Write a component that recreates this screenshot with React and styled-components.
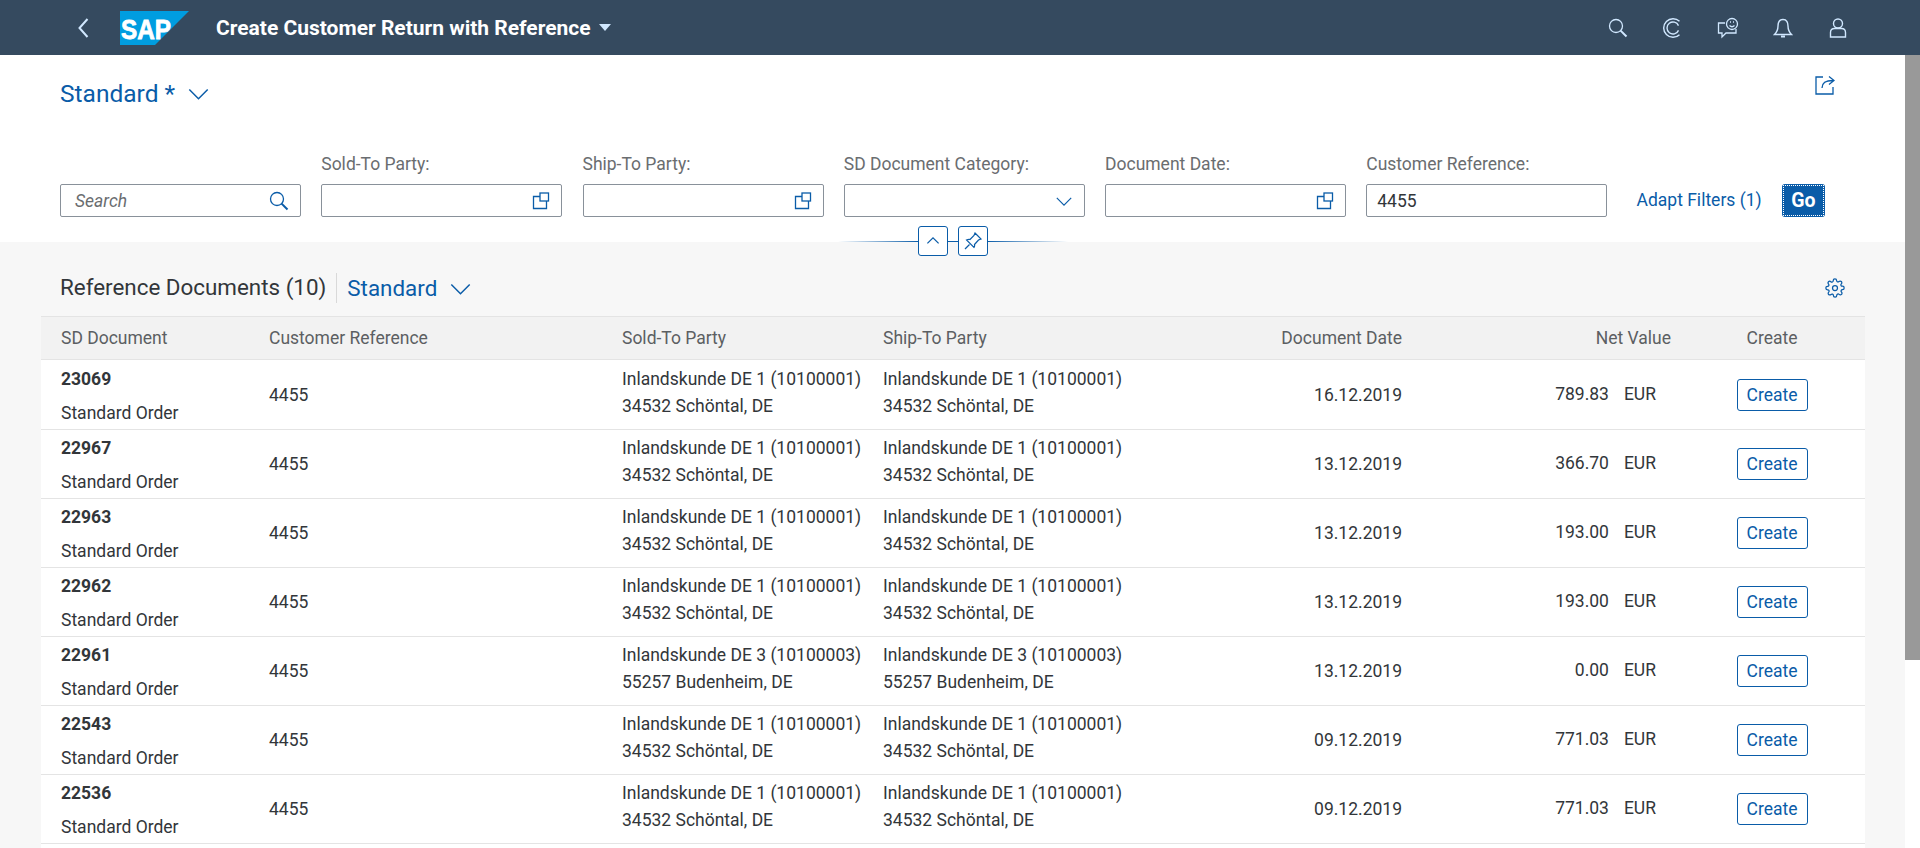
import React from 'react'
import styled, { createGlobalStyle } from 'styled-components'

const blue = '#0a5ca8'
const iconLight = '#d1e8ff'

const GlobalStyle = createGlobalStyle`
  html, body { margin: 0; padding: 0; height: 100%; overflow: hidden; }
  body { font-family: Roboto, "Liberation Sans", sans-serif; color: #32363a; background: #fff; }
`

const Page = styled.div`
  height: 848px;
  display: flex;
  flex-direction: column;
  overflow: hidden;
`
const ShellBar = styled.header`
  height: 55px;
  flex: none;
  background: #354a5f;
  display: flex;
  align-items: center;
  padding: 0 55px 0 78px;
`
const BackButton = styled.div`
  width: 42px;
  height: 20px;
  display: flex;
`
const Logo = styled.svg`
  width: 69px;
  height: 34px;
  flex: none;
  margin-right: 27px;
`
const AppTitle = styled.div`
  font-size: 21px;
  font-weight: 700;
  color: #fff;
  white-space: nowrap;
`
const Caret = styled.span`
  width: 0;
  height: 0;
  margin-left: 8px;
  border-left: 6px solid transparent;
  border-right: 6px solid transparent;
  border-top: 7px solid ${iconLight};
`
const ShellActions = styled.div`
  margin-left: auto;
  display: flex;
  align-items: center;
`
const ShellAction = styled.div`
  width: 55px;
  display: flex;
  justify-content: center;
`
const Body = styled.div`
  flex: 1;
  min-height: 0;
  display: flex;
`
const Content = styled.main`
  flex: 1;
  min-width: 0;
  display: flex;
  flex-direction: column;
  background: #f7f7f7;
`
const ScrollTrack = styled.div`
  width: 15px;
  flex: none;
  background: #fff;
`
const ScrollThumb = styled.div`
  height: 605px;
  background: #999;
`
const FilterHeader = styled.section`
  position: relative;
  height: 187px;
  flex: none;
  background: #fff;
  padding: 0 80px 0 60px;
  box-sizing: border-box;
`
const VariantRow = styled.div`
  height: 77px;
  display: flex;
  align-items: center;
  justify-content: space-between;
`
const VariantTitle = styled.div`
  display: flex;
  align-items: center;
  gap: 12px;
  color: ${blue};
  font-size: ${(p) => p.$size}px;
  line-height: 30px;
`
const ShareIcon = styled.svg`
  width: 20px;
  height: 20px;
  margin: -18px -10px 0 0;
`
const FilterRow = styled.div`
  display: flex;
  align-items: flex-end;
  gap: 20.25px;
  margin-top: 20px;
`
const Field = styled.div`
  width: 241px;
  flex: none;
`
const FieldLabel = styled.div`
  font-size: 17.5px;
  line-height: 22px;
  color: #6a6d70;
  margin-bottom: 9px;
  padding-top: 1px;
`
const InputBox = styled.div`
  height: 33px;
  box-sizing: border-box;
  border: 1px solid #89919a;
  border-radius: 2px;
  background: #fff;
  display: flex;
  align-items: center;
  justify-content: space-between;
  padding: 0 11px 0 ${(p) => (p.$search ? 14 : 10)}px;
  font-size: 17.5px;
  font-style: ${(p) => (p.$search ? 'italic' : 'normal')};
  color: ${(p) => (p.$search ? '#6a6d70' : '#32363a')};
`
const AdaptLink = styled.div`
  color: ${blue};
  font-size: 17.5px;
  line-height: 33px;
  margin-left: 9px;
  white-space: nowrap;
`
const GoButton = styled.div`
  width: 43px;
  height: 33px;
  box-sizing: border-box;
  background: ${blue};
  border-radius: 3px;
  color: #fff;
  font-size: 19.5px;
  font-weight: 700;
  display: flex;
  align-items: center;
  justify-content: center;
  position: relative;
  &::after {
    content: '';
    position: absolute;
    inset: 1px;
    border: 1px dotted #fff;
  }
`
const CollapseBar = styled.div`
  position: absolute;
  z-index: 1;
  left: 838px;
  top: 171px;
  width: 230px;
  height: 30px;
  display: flex;
  justify-content: center;
  gap: 10px;
  background: linear-gradient(to right, transparent, ${blue} 35%, ${blue} 65%, transparent) center / 100% 1px no-repeat;
`
const CollapseButton = styled.div`
  width: 30px;
  height: 30px;
  box-sizing: border-box;
  background: #fff;
  border: 1px solid ${blue};
  border-radius: 3px;
  display: flex;
  align-items: center;
  justify-content: center;
`
const TableToolbar = styled.div`
  height: 74px;
  flex: none;
  box-sizing: border-box;
  display: flex;
  align-items: flex-start;
  padding: 31px 60px 13px 60px;
`
const TableTitle = styled.div`
  font-size: 22.4px;
  line-height: 28px;
  padding-bottom: 2px;
  color: #32363a;
  padding-right: 10px;
  border-right: 1px solid #d9d9d9;
  margin-right: 10px;
`
const Gear = styled.svg`
  width: 20px;
  height: 20px;
  margin: 5px 0 0 auto;
`
const Table = styled.div`
  margin: 0 40px 0 41px;
  background: #fff;
  flex: 1;
`
const Row = styled.div`
  display: grid;
  grid-template-columns: 208px 353px 261px 261px 298px 269px 1fr;
  align-items: center;
  height: ${(p) => (p.$head ? 44 : 69)}px;
  margin-bottom: ${(p) => (p.$head ? 1 : 0)}px;
  box-sizing: border-box;
  border-bottom: 1px solid #e4e4e4;
  ${(p) => p.$head && 'background: #f2f2f2; border-top: 1px solid #e4e4e4; color: #5c5f62;'}
  font-size: 17.5px;
`
const Cell = styled.div`
  padding: 0 ${(p) => (p.$end ? 20 : 0)}px 0 ${(p) => (p.$end ? 0 : 20)}px;
  margin-top: ${(p) => (p.$body ? -2 : 0)}px;
  text-align: ${(p) => (p.$end ? 'right' : 'left')};
  white-space: nowrap;
  line-height: 27px;
`
const PartyLines = styled(Cell)`
  margin-top: -6px;
`
const DocCell = styled(Cell)`
  padding-top: 2px;
`
const DocNumber = styled.div`
  font-weight: 700;
  line-height: 33px;
`
const DocType = styled.div`
  line-height: 35px;
`
const NetValue = styled.div`
  display: flex;
  justify-content: flex-end;
  padding-right: 35px;
  gap: 15px;
  margin-top: -4px;
`
const CreateCell = styled.div`
  display: flex;
  justify-content: center;
  padding-right: 12px;
  margin-top: ${(p) => (p.$body ? -2 : 0)}px;
`
const CreateButton = styled.div`
  width: 71px;
  height: 32px;
  box-sizing: border-box;
  border: 1px solid ${blue};
  border-radius: 3px;
  color: ${blue};
  display: flex;
  align-items: center;
  justify-content: center;
  font-size: 17.5px;
`

const Stroke = ({ color = blue, size = 20, box = 20, width = 1.3, children, ...rest }) => (
  <svg width={size} height={size} viewBox={`0 0 ${box} ${box}`} fill="none" stroke={color} strokeWidth={width} {...rest}>
    {children}
  </svg>
)
const SearchIcon = ({ color }) => (
  <Stroke color={color}>
    <circle cx="8" cy="8" r="6.5" />
    <path d="M12.6 12.6 18.5 18.5" strokeWidth="2" />
  </Stroke>
)
const ValueHelp = () => (
  <Stroke size={18} box={18}>
    <rect x="8" y="1" width="8.5" height="8" />
    <path d="M8 4.5H1.5V16.5H14.5V9" />
  </Stroke>
)
const Chevron = ({ size = 20, dir = 'down', width = 1.3 }) => (
  <Stroke size={size} width={width}>
    <path d={dir === 'down' ? 'M2 6.5 10 14.5 18 6.5' : 'M3 13 10 6 17 13'} />
  </Stroke>
)

const rows = [
  ['23069', 1, '16.12.2019', '789.83'],
  ['22967', 1, '13.12.2019', '366.70'],
  ['22963', 1, '13.12.2019', '193.00'],
  ['22962', 1, '13.12.2019', '193.00'],
  ['22961', 3, '13.12.2019', '0.00'],
  ['22543', 1, '09.12.2019', '771.03'],
  ['22536', 1, '09.12.2019', '771.03'],
]

const Party = ({ kind }) => (
  <PartyLines>
    <div>{kind === 1 ? 'Inlandskunde DE 1 (10100001)' : 'Inlandskunde DE 3 (10100003)'}</div>
    <div>{kind === 1 ? '34532 Schöntal, DE' : '55257 Budenheim, DE'}</div>
  </PartyLines>
)

export default function App() {
  return (
    <Page>
      <GlobalStyle />
      <ShellBar>
        <BackButton>
          <Stroke color={iconLight} size={20} width={2}>
            <path d="M9.500 1 1.500 10l8 9" />
          </Stroke>
        </BackButton>
        <Logo viewBox="0 0 69 34">
          <polygon points="0,0 69,0 35,34 0,34" fill="#009de0" />
          <text x="1" y="28" fill="#fff" stroke="#fff" strokeWidth="0.8" fontFamily="Liberation Sans" fontWeight="700" fontSize="27" textLength="50" lengthAdjust="spacingAndGlyphs">SAP</text>
        </Logo>
        <AppTitle>Create Customer Return with Reference</AppTitle>
        <Caret />
        <ShellActions>
          <ShellAction><SearchIcon color={iconLight} /></ShellAction>
          <ShellAction>
            <Stroke color={iconLight} size={20} width={1.4}>
              <path d="M16.500 3.350A9.300 9.300 0 1 0 16.500 16.650" />
              <path d="M15.500 7.600A6 6 0 1 0 15.500 12.400" />
            </Stroke>
          </ShellAction>
          <ShellAction>
            <Stroke color={iconLight} size={22} box={22} width={1.3}>
              <path d="M8 6H1.500V16H5V20L9 16H19V12" />
              <circle cx="15" cy="7" r="5.500" />
              <path d="M12.500 8.500C14 10 16 10 17.500 8.500M13 5h1M16 5h1" />
            </Stroke>
          </ShellAction>
          <ShellAction>
            <Stroke color={iconLight} size={20} width={1.4}>
              <path d="M10 1.500C6 1.500 5 5 5 8C5 12 4 14 1.500 16.500H18.500C16 14 15 12 15 8C15 5 14 1.500 10 1.500Z" />
              <path d="M8 18.500H12" strokeWidth="2" />
            </Stroke>
          </ShellAction>
          <ShellAction>
            <Stroke color={iconLight} size={20} width={1.4}>
              <circle cx="10" cy="5.500" r="4.500" />
              <path d="M2.500 19V14.500C2.500 11.500 4.500 10.500 6.500 10.500H13.500C15.500 10.500 17.500 11.500 17.500 14.500V19Z" />
            </Stroke>
          </ShellAction>
        </ShellActions>
      </ShellBar>
      <Body>
        <Content>
          <FilterHeader>
            <VariantRow>
              <VariantTitle $size={24.5}>
                Standard *
                <Chevron size={23} />
              </VariantTitle>
              <ShareIcon viewBox="0 0 20 20" fill="none" stroke={blue} strokeWidth="1.3">
                <path d="M8 2H1V19H18V12" />
                <path d="M7 13C7 8 10 5.500 18 5.500M14 1.500 19 5.500 14 9.500" />
              </ShareIcon>
            </VariantRow>
            <FilterRow>
              <Field>
                <InputBox $search>
                  Search
                  <SearchIcon />
                </InputBox>
              </Field>
              <Field>
                <FieldLabel>Sold-To Party:</FieldLabel>
                <InputBox><span /><ValueHelp /></InputBox>
              </Field>
              <Field>
                <FieldLabel>Ship-To Party:</FieldLabel>
                <InputBox><span /><ValueHelp /></InputBox>
              </Field>
              <Field>
                <FieldLabel>SD Document Category:</FieldLabel>
                <InputBox><span /><Chevron size={18} /></InputBox>
              </Field>
              <Field>
                <FieldLabel>Document Date:</FieldLabel>
                <InputBox><span /><ValueHelp /></InputBox>
              </Field>
              <Field>
                <FieldLabel>Customer Reference:</FieldLabel>
                <InputBox>4455</InputBox>
              </Field>
              <AdaptLink>Adapt Filters (1)</AdaptLink>
              <GoButton>Go</GoButton>
            </FilterRow>
            <CollapseBar>
              <CollapseButton><Chevron size={16} dir="up" width={1.5} /></CollapseButton>
              <CollapseButton>
                <Stroke size={20} width={1.2}>
                  <path d="M12 2 18 8 15.500 9 11.500 13.500C12 15 11.500 16 11 16.500L3.500 9C4.500 8.500 5.500 8 7 8.500L11 4.500Z" />
                  <path d="M6.500 13.500 2 18" />
                </Stroke>
              </CollapseButton>
            </CollapseBar>
          </FilterHeader>
          <TableToolbar>
            <TableTitle>Reference Documents (10)</TableTitle>
            <VariantTitle $size={22.4}>
              Standard
              <Chevron size={23} />
            </VariantTitle>
            <Gear viewBox="0 0 24 24" fill="none" stroke={blue} strokeWidth="1.5">
              <circle cx="12" cy="12" r="3" />
              <path d="M19.400 15a1.650 1.650 0 0 0 .330 1.820l.060.060a2 2 0 1 1-2.830 2.830l-.060-.060a1.650 1.650 0 0 0-2.800 1.170V21a2 2 0 1 1-4 0v-.090a1.650 1.650 0 0 0-2.800-1.170l-.060.060a2 2 0 1 1-2.830-2.830l.060-.060a1.650 1.650 0 0 0-1.170-2.800H3a2 2 0 1 1 0-4h.090a1.650 1.650 0 0 0 1.170-2.800l-.060-.060a2 2 0 1 1 2.830-2.830l.060.060a1.650 1.650 0 0 0 2.800-1.170V3a2 2 0 1 1 4 0v.090a1.650 1.650 0 0 0 2.800 1.170l.060-.060a2 2 0 1 1 2.830 2.830l-.060.060a1.650 1.650 0 0 0 1.170 2.800H21a2 2 0 1 1 0 4h-.090a1.650 1.650 0 0 0-1.510 1z" />
            </Gear>
          </TableToolbar>
          <Table>
            <Row $head>
              <Cell>SD Document</Cell>
              <Cell>Customer Reference</Cell>
              <Cell>Sold-To Party</Cell>
              <Cell>Ship-To Party</Cell>
              <Cell $end>Document Date</Cell>
              <Cell $end>Net Value</Cell>
              <CreateCell>Create</CreateCell>
            </Row>
            {rows.map(([doc, kind, date, value]) => (
              <Row key={doc}>
                <DocCell>
                  <DocNumber>{doc}</DocNumber>
                  <DocType>Standard Order</DocType>
                </DocCell>
                <Cell $body>4455</Cell>
                <Party kind={kind} />
                <Party kind={kind} />
                <Cell $end $body>{date}</Cell>
                <NetValue>
                  <span>{value}</span>
                  <span>EUR</span>
                </NetValue>
                <CreateCell $body>
                  <CreateButton>Create</CreateButton>
                </CreateCell>
              </Row>
            ))}
          </Table>
        </Content>
        <ScrollTrack>
          <ScrollThumb />
        </ScrollTrack>
      </Body>
    </Page>
  )
}
